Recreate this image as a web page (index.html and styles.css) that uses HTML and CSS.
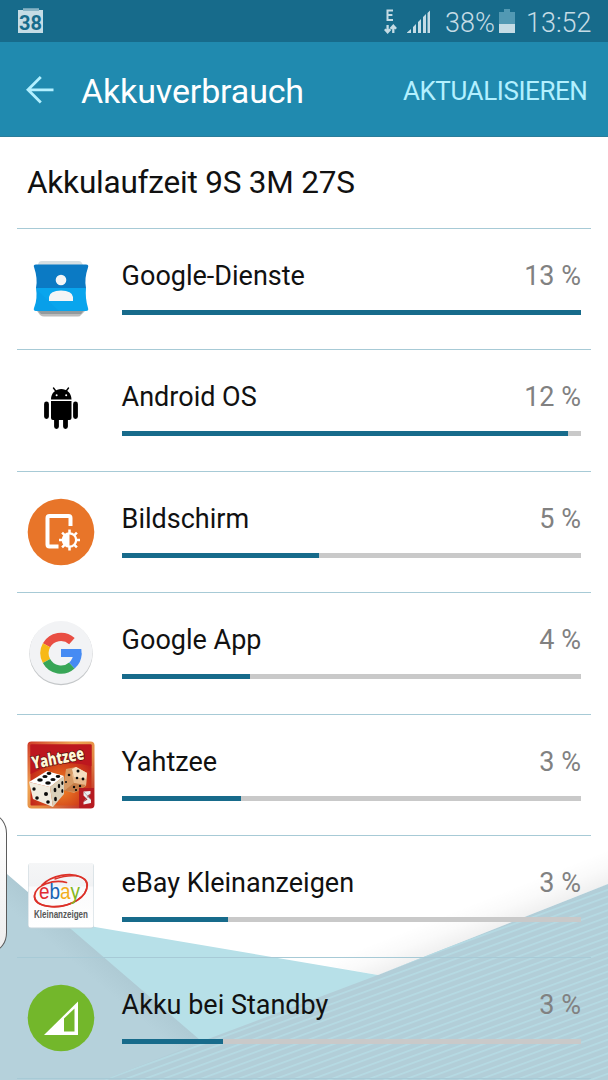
FILE: index.html
```html
<!DOCTYPE html>
<html lang="de">
<head>
<meta charset="utf-8">
<title>Akkuverbrauch</title>
<link rel="stylesheet" href="styles.css">
</head>
<body>
<div class="screen">
  <svg class="wallpaper" viewBox="0 0 608 1080" aria-hidden="true">
    <defs>
      <pattern id="stripes" width="20" height="6.4" patternUnits="userSpaceOnUse" patternTransform="rotate(-20)">
        <rect width="20" height="1.7" fill="#b5dae3"/>
      </pattern>
      <linearGradient id="shade" gradientUnits="userSpaceOnUse" x1="493" y1="930" x2="481" y2="900">
        <stop offset="0" stop-color="#000" stop-opacity=".06"/>
        <stop offset=".5" stop-color="#000" stop-opacity=".02"/>
        <stop offset="1" stop-color="#000" stop-opacity="0"/>
      </linearGradient>
      <linearGradient id="fold" gradientUnits="userSpaceOnUse" x1="100" y1="953" x2="84" y2="972">
        <stop offset="0" stop-color="#aecad4"/>
        <stop offset="1" stop-color="#b5d1db"/>
      </linearGradient>
    </defs>
    <path d="M608 850V884L378 975L300 961Z" fill="url(#shade)"/>
    <path d="M56 915L95 927L378 975L420 1080H180Z" fill="#b7e0e8"/>
    <path d="M0 868L200 1040L250 1080H0Z" fill="url(#fold)"/>
    <path d="M608 884L378 975L200 1042L104 1080H608Z" fill="#b2ced8"/>
    <path d="M608 884L378 975L200 1042L104 1080H608Z" fill="url(#stripes)"/>
  </svg>

  <div class="statusbar">
    <svg class="notice" viewBox="0 0 26 26" aria-hidden="true">
      <path d="M5 .5H21V2H25V25H0V2H5Z" fill="#c5dce5"/>
      <path d="M5 2H21" stroke="#176b8b" stroke-width=".7"/>
      <text class="notice-text" x="12.6" y="21.500" textLength="23" lengthAdjust="spacingAndGlyphs">38</text>
    </svg>
    <svg class="network" viewBox="0 0 48 26" aria-hidden="true">
      <path d="M9 1.5H3.5V11H9M3.5 6H8.4" fill="none" stroke="#c5dce5" stroke-width="2"/>
      <path d="M3.6 16V23M.8 20.2L3.6 23.2L6.4 20.2M9.3 24V17M6.5 19.8L9.3 16.8L12.1 19.8" fill="none" stroke="#c5dce5" stroke-width="2.300"/>
      <path d="M23 24V23.500L27 20V24ZM29 24V18L32 15V24ZM34 24V13L37 10V24ZM39 24V8L42 5V24ZM43.500 24V4L46 1.500V24Z" fill="#c5dce5"/>
    </svg>
    <span class="percent">38%</span>
    <svg class="battery" viewBox="0 0 16 24" aria-hidden="true">
      <path d="M5 0H11V3H16V24H0V3H5Z" fill="#5299b3"/>
      <path d="M0 15H16V24H0Z" fill="#c5dce5"/>
    </svg>
    <span class="clock">13:52</span>
  </div>

  <header class="appbar">
    <svg class="back" viewBox="0 0 28 28" aria-hidden="true">
      <path d="M14.800 1L2 13.800L14.800 26.600M2 13.800H27.500" fill="none" stroke="#b3f0ff" stroke-width="2.800"/>
    </svg>
    <h1 class="title">Akkuverbrauch</h1>
    <span class="action">AKTUALISIEREN</span>
  </header>

  <h2 class="runtime">Akkulaufzeit 9S 3M 27S</h2>

  <ul class="list">
    <li class="row">
      <svg class="icon" viewBox="0 0 68 68" aria-hidden="true">
        <path d="M12 7Q13 6 15 6H52Q54 6 55 8L58 14H9Z" fill="#d5dfe3"/>
        <path d="M10 56H58L54 60Q53 61.500 51 61.500H17Q15 61.500 13 60Z" fill="#bcbcbc"/>
        <path d="M10 55H57L54 59H14Z" fill="#929a9d"/>
        <path d="M7 12Q6 9.500 9 9.500H59Q62 9.500 61 12.500Q57 24 59 33H9Q11 24 7 12Z" fill="#0b7ac4"/>
        <path d="M9 33H59Q58 43 61 53Q62 56 59 56H9Q6 56 7 53Q11 43 9 33Z" fill="#09a5ed"/>
        <path d="M9 34L32 56H8Q10 43 9 34Z" fill="#098fe0" opacity=".25"/>
        <circle cx="34" cy="25" r="5.300" fill="#f4f5f6"/>
        <path d="M22 46V42Q23 35.500 34 35.500T46 42V46Z" fill="#f4f5f6"/>
      </svg>
      <div class="body"><div class="line"><span class="name">Google-Dienste</span><span class="value">13 %</span></div><div class="track"><div class="fill" style="width:100%"></div></div></div>
    </li>
    <li class="row">
      <svg class="icon" viewBox="0 0 68 68" aria-hidden="true">
        <path d="M24 23.500C24 9.500 44.500 9.500 44.500 23.500ZM24 25H44.500V42Q44.500 44 42.500 44H26Q24 44 24 42Z" fill="#000"/>
        <path d="M19.500 28V40.500M48.500 28V40.500M29.500 42V50.500M38.500 42V50.500" stroke="#000" stroke-width="4.800" stroke-linecap="round"/>
        <path d="M26.500 12L29.500 16M41.500 12L38.500 16" stroke="#000" stroke-width="1.400" stroke-linecap="round"/>
        <circle cx="29.600" cy="19.300" r="1" fill="#fff"/><circle cx="39.200" cy="19.300" r="1" fill="#fff"/>
      </svg>
      <div class="body"><div class="line"><span class="name">Android OS</span><span class="value">12 %</span></div><div class="track"><div class="fill" style="width:97.2%"></div></div></div>
    </li>
    <li class="row">
      <svg class="icon" viewBox="0 0 68 68" aria-hidden="true">
        <circle cx="34" cy="34" r="33.300" fill="#e87529"/>
        <path d="M43.500 28V20Q43.500 18 41.500 18H22.500Q20.500 18 20.500 20V46.500Q20.500 48.500 22.500 48.500H31.500" fill="none" stroke="#fff" stroke-width="4"/>
        <g fill="#fff">
          <circle cx="42.500" cy="42" r="7.800"/>
          <path d="M42.500 31.500V52.500M32 42H53M35.100 34.600L49.900 49.400M49.900 34.600L35.100 49.400" stroke="#fff" stroke-width="2.500"/>
        </g>
        <path d="M42.500 36.500A5.500 5.500 0 0 1 42.500 47.500Z" fill="#e87529"/>
      </svg>
      <div class="body"><div class="line"><span class="name">Bildschirm</span><span class="value">5 %</span></div><div class="track"><div class="fill" style="width:43%"></div></div></div>
    </li>
    <li class="row">
      <svg class="icon" viewBox="0 0 68 68" aria-hidden="true">
        <circle cx="34" cy="34.500" r="31.700" fill="#c4c7c9"/>
        <circle cx="34" cy="33.500" r="31.500" fill="#f2f3f5"/>
        <g fill="none" stroke-width="8.300">
          <path d="M44.900 22.100A16.500 16.500 0 0 0 19.500 26.300" stroke="#e94e43"/>
          <path d="M19.500 26.300A16.500 16.500 0 0 0 19.500 42.100" stroke="#f7b916"/>
          <path d="M19.500 42.100A16.500 16.500 0 0 0 44.900 46.500" stroke="#38a657"/>
          <path d="M44.900 46.500A16.500 16.500 0 0 0 50.500 34.200" stroke="#468bf3"/>
        </g>
        <path d="M34 30H54.300Q55 34 54 38H34Z" fill="#468bf3"/>
      </svg>
      <div class="body"><div class="line"><span class="name">Google App</span><span class="value">4 %</span></div><div class="track"><div class="fill" style="width:28%"></div></div></div>
    </li>
    <li class="row">
      <svg class="icon" viewBox="0 0 68 68" aria-hidden="true">
        <defs>
          <radialGradient id="glow" cx=".5" cy=".7" r=".65"><stop offset="0" stop-color="#f28a28"/><stop offset=".55" stop-color="#d4481a"/><stop offset="1" stop-color="#b9151c"/></radialGradient>
          <linearGradient id="frame" x1="0" y1="0" x2="1" y2="1"><stop offset="0" stop-color="#cf3726"/><stop offset=".35" stop-color="#efa453"/><stop offset=".6" stop-color="#e28a43"/><stop offset="1" stop-color="#b71720"/></linearGradient>
        </defs>
        <rect x=".5" y=".5" width="67" height="67" rx="4" fill="url(#frame)"/>
        <rect x="3.500" y="3.500" width="61" height="61" rx="1" fill="url(#glow)"/>
        <path d="M3.500 3.500H64.500V25Q34 17 3.500 33Z" fill="#bd171e"/>
        <text class="game-text" x="6" y="28" transform="rotate(-11 6 28)" textLength="53" lengthAdjust="spacingAndGlyphs">Yahtzee</text>
        <path d="M39 28L49 26L60 32L59 45L47 52L36 49Z" fill="#d79a65"/>
        <path d="M49 26L60 32L59 45L47 42L45 34Z" fill="#e9b98b"/>
        <path d="M45 28L49 26L60 32L59 38L47 36Z" fill="#f6dec0"/>
        <path d="M47 42L59 44L50 51L37 50Z" fill="#c77e48"/>
        <path d="M2 41L20 30L37 35L23 46Z" fill="#fff"/>
        <path d="M2 41L23 46L26 66L6 58Z" fill="#f1ece0"/>
        <path d="M23 46L37 35L37 53L26 66Z" fill="#d9cfb9"/>
        <g fill="#0b0b0b">
          <ellipse cx="13" cy="39" rx="2.800" ry="1.800"/><ellipse cx="18" cy="35.500" rx="2.600" ry="1.600"/><ellipse cx="22" cy="32.500" rx="2.400" ry="1.400"/>
          <ellipse cx="21" cy="42" rx="2.800" ry="1.800"/><ellipse cx="26" cy="38.500" rx="2.600" ry="1.600"/><ellipse cx="31" cy="35.500" rx="2.300" ry="1.400"/>
          <circle cx="7" cy="48" r="1.700"/><circle cx="19" cy="53" r="2"/><circle cx="10" cy="57" r="1.800"/><circle cx="21" cy="61" r="1.800"/>
          <ellipse cx="28" cy="49" rx="1.400" ry="2.300"/><ellipse cx="32" cy="45" rx="1.200" ry="2.200"/><ellipse cx="35.300" cy="42" rx="1" ry="2"/><ellipse cx="28.500" cy="58" rx="1.400" ry="2.200"/><ellipse cx="35.300" cy="50" rx="1" ry="1.900"/>
          <circle cx="51" cy="30" r="1.500"/><circle cx="56" cy="38" r="1.400"/><circle cx="50" cy="37" r="1.300"/><circle cx="42" cy="34" r="1.300"/><circle cx="39" cy="41" r="1"/><circle cx="47" cy="46" r="1.200"/><circle cx="53" cy="45" r="1.200"/><circle cx="49" cy="49" r="1.100"/>
        </g>
        <path d="M52 47H67V64Q67 67 64 67H52Z" fill="#b61b21"/>
        <path d="M56.500 50.500L63.500 50V52.500L60 55L64 58.500V62L56.500 63.500V61L60.500 58.500L56.500 54.500Z" fill="#eee"/>
        <path d="M57 51L64 59M57 60.500L63.500 52.500" stroke="#999" stroke-width=".7"/>
      </svg>
      <div class="body"><div class="line"><span class="name">Yahtzee</span><span class="value">3 %</span></div><div class="track"><div class="fill" style="width:26%"></div></div></div>
    </li>
    <li class="row">
      <svg class="icon" viewBox="0 0 68 68" aria-hidden="true">
        <defs><linearGradient id="tile" x2="0" y2="1"><stop offset="0" stop-color="#f5f6f7"/><stop offset=".35" stop-color="#f1f2f4"/><stop offset=".38" stop-color="#fafafb"/><stop offset="1" stop-color="#fff"/></linearGradient></defs>
        <rect x="1" y="1.500" width="66" height="65" rx="3" fill="#c5d3da"/>
        <rect x="1.500" y="1" width="65" height="64.500" rx="2.500" fill="url(#tile)"/>
        <g fill="none" stroke="#dc3129" stroke-linecap="round">
          <path d="M39.500 20.500C27 17 8 23 7.500 34C8 45 29 48 45 41C61 34 65 20 54 15C44 10 25 13 15 23" stroke-width="1.700"/>
          <path d="M28 17C42 12 58 12 60 22C61 35 44 45 25 44.500C13 44 6 40 7.500 33" stroke-width="1.400"/>
        </g>
        <text class="ebay" x="12" y="36.500" textLength="41" lengthAdjust="spacingAndGlyphs"><tspan fill="#e12b33">e</tspan><tspan fill="#1764b5">b</tspan><tspan fill="#f3ae1b">a</tspan><tspan fill="#85b71d">y</tspan></text>
        <text class="ebay-sub" x="7" y="55.500" textLength="54" lengthAdjust="spacingAndGlyphs">Kleinanzeigen</text>
      </svg>
      <div class="body"><div class="line"><span class="name">eBay Kleinanzeigen</span><span class="value">3 %</span></div><div class="track"><div class="fill" style="width:23.100%"></div></div></div>
    </li>
    <li class="row">
      <svg class="icon" viewBox="0 0 68 68" aria-hidden="true">
        <circle cx="34" cy="34" r="33.300" fill="#73b72b"/>
        <path d="M17 51L51 17.500V51Z" fill="#fff"/>
        <path d="M37 34.500L47.500 24.500V47.500H37Z" fill="#73b72b"/>
      </svg>
      <div class="body"><div class="line"><span class="name">Akku bei Standby</span><span class="value">3 %</span></div><div class="track"><div class="fill" style="width:22.100%"></div></div></div>
    </li>
    <li class="row"></li>
  </ul>
  <div class="edge-handle"></div>
</div>
</body>
</html>
```

FILE: styles.css
```css
* { box-sizing: border-box; }
body { margin: 0; background: #fff; font-family: Roboto, "Liberation Sans", sans-serif; }
.screen { position: relative; width: 608px; height: 1080px; overflow: hidden; isolation: isolate; }
.wallpaper { position: absolute; inset: 0; width: 608px; height: 1080px; z-index: -1; }

.statusbar { display: flex; align-items: center; height: 42px; padding: 2px 17px 0 18px; background: #176b8b; color: #c5dce5; font-size: 27px; font-weight: 300; line-height: 42px; white-space: nowrap; }
.notice { width: 26px; height: 26px; margin: 0 auto 2px 0; }
.notice-text { font-size: 21px; font-weight: 700; text-anchor: middle; fill: #176b8b; }
.network { width: 48px; height: 26px; margin-right: 13px; }
.percent { width: 49px; padding-top: 2px; }
.battery { width: 16px; height: 24px; margin: 0 11px 3px 5px; }
.clock { width: 65px; padding-top: 2px; }

.appbar { display: flex; align-items: center; height: 94.500px; padding: 2px 20.500px 0 26px; background: #208aaf; border-bottom: 1px solid #2b7d9a; }
.back { width: 28px; height: 28px; margin-right: 27px; }
.title { margin: 0 auto 0 0; padding-top: 2px; color: #fff; font-size: 34px; font-weight: 400; line-height: 44px; letter-spacing: -.15px; white-space: nowrap; }
.action { padding-top: 2px; color: #b3f0ff; font-size: 26px; font-weight: 400; line-height: 40px; letter-spacing: -.42px; white-space: nowrap; }

.runtime { height: 91px; margin: 0; padding-left: 27px; color: #111; font-size: 31.500px; font-weight: 400; line-height: 91px; letter-spacing: -.2px; white-space: nowrap; }

.list { margin: 0 17px; padding: 0; list-style: none; }
.row { display: flex; height: 121.500px; padding: 26px 10px 0; border-top: 1px solid #a7cad6; }
.icon { flex: none; width: 68px; height: 68px; margin-right: 26.600px; }
.body { flex: 1; }
.line { display: flex; justify-content: space-between; height: 55px; padding-top: 1px; line-height: 40px; font-size: 27px; white-space: nowrap; }
.name { color: #111; }
.value { color: #818181; font-weight: 400; }
.track { height: 5px; background: #c9c9c9; }
.fill { height: 5px; background: #176b8b; }

.game-text { font-family: "Open Sans", sans-serif; font-size: 17px; font-weight: 800; fill: #fff8d8; stroke: #59120e; stroke-width: 1.500px; paint-order: stroke; }
.ebay { font-family: "Liberation Sans", sans-serif; font-size: 22px; stroke-width: .4px; }
.ebay-sub { font-family: "Liberation Sans", sans-serif; font-size: 10.500px; font-weight: 700; fill: #555; }

.edge-handle { position: absolute; left: -20px; top: 815px; width: 27px; height: 136px; border: 1px solid #5b5b5b; border-radius: 16px / 22px; background: linear-gradient(#fff, #eee); }
```
